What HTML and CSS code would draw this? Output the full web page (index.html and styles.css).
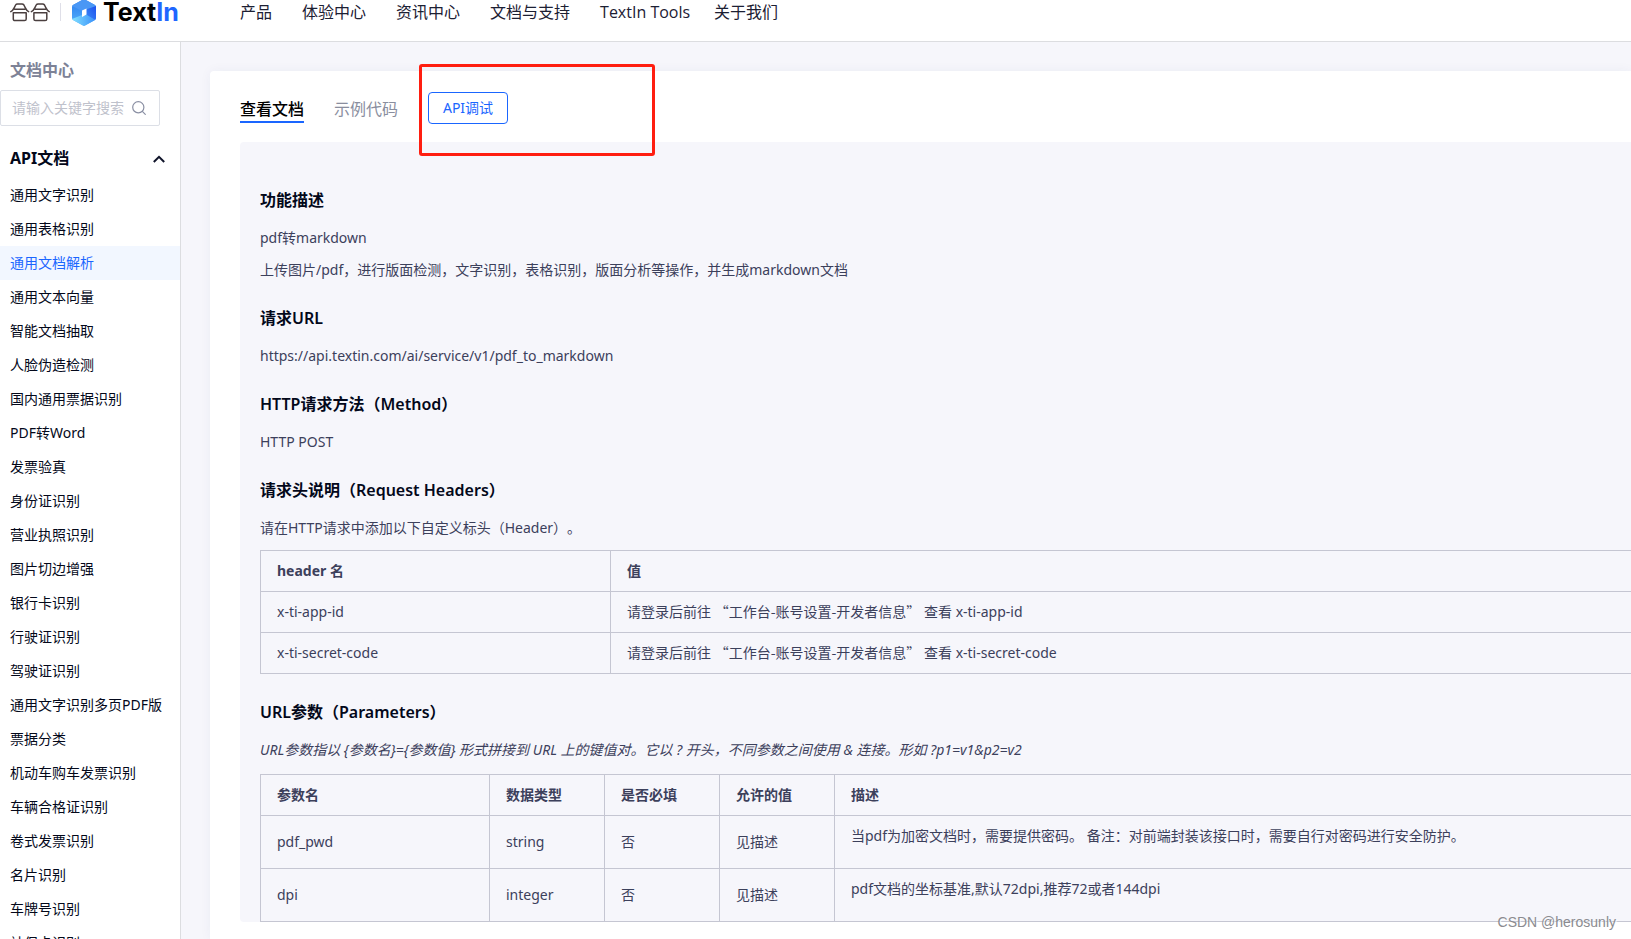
FILE: index.html
```html
<!DOCTYPE html>
<html lang="zh-CN">
<head>
<meta charset="utf-8">
<title>TextIn 文档中心</title>
<link rel="stylesheet" href="styles.css">
</head>
<body>
<header class="header">
  <a class="brand" href="#">
    <svg class="brand-hehe" width="40" height="19" viewBox="0 0 40 19" fill="none" stroke="#4a3f3f" stroke-width="1.5" stroke-linejoin="round" stroke-linecap="round">
      <path d="M.8 8.600C2.400 7.800 3.500 6.300 4.300 4.600L5.600 2Q6.200.9 7.500.9H12Q13.200.9 13.900 2L15.200 4.600C16 6.300 17 7.800 18.600 8.600M4.500 6.300H15M3.300 9.800H16.200V15.900Q16.200 17.600 14.500 17.600H5Q3.300 17.600 3.300 15.900Z"/>
      <path d="M21.400 8.600C23 7.800 24.100 6.300 24.900 4.600L26.200 2Q26.800.9 28.100.9H32.600Q33.800.9 34.500 2L35.800 4.600C36.600 6.300 37.600 7.800 39.200 8.600M25.100 6.300H35.600M23.900 9.800H36.800V15.900Q36.800 17.600 35.100 17.600H25.600Q23.900 17.600 23.900 15.900Z"/>
    </svg>
    <span class="brand-line"></span>
    <svg class="brand-cube" width="24" height="27" viewBox="0 0 24 27">
      <defs>
        <linearGradient id="cubeLeft" x1="0" y1="0" x2="0" y2="1"><stop offset="0" stop-color="#2878ee"/><stop offset="1" stop-color="#55b4fb"/></linearGradient>
        <linearGradient id="cubeRight" x1="1" y1="0" x2="0" y2="1"><stop offset="0" stop-color="#1c50ed"/><stop offset="1" stop-color="#3c8cf8"/></linearGradient>
        <linearGradient id="cubeBase" x1="0" y1="0" x2="1" y2="0"><stop offset="0" stop-color="#82e1ff"/><stop offset="1" stop-color="#3b91fa"/></linearGradient>
      </defs>
      <path d="M12 0 23 6Q24 7 24 8V19Q24 20 23 21L13 26.500Q12 27 11 26.500L1 21Q0 20 0 19V8Q0 7 1 6Z" fill="url(#cubeLeft)"/>
      <path d="M12 0 23 6Q24 7 24 8L14 10.500 10 12 0 7 1 6Z" fill="#4a97f5"/>
      <path d="M14 10.500 24 7V19Q24 20 23 21L14 15.500Z" fill="url(#cubeRight)"/>
      <path d="M0 20 10 16 14 15.500 23 21 13 26.500Q12 27 11 26.500L1 21Z" fill="url(#cubeBase)"/>
      <path d="M10 11.500 14.500 9.500V15.500L10 18Z" fill="#fff"/>
    </svg>
    <span class="brand-name">Text<span class="brand-in">In</span></span>
  </a>
  <nav class="nav">
    <a href="#">产品</a>
    <a href="#">体验中心</a>
    <a href="#">资讯中心</a>
    <a href="#">文档与支持</a>
    <a class="nav-tools" href="#">TextIn Tools</a>
    <a href="#">关于我们</a>
  </nav>
</header>
<div class="layout">
  <aside class="sidebar">
    <h2 class="sidebar-title">文档中心</h2>
    <div class="search">
      <input class="search-input" type="text" placeholder="请输入关键字搜索" aria-label="请输入关键字搜索">
      <svg width="14" height="14" viewBox="0 0 14 14" fill="none" stroke="#8a8fa3" stroke-width="1.200" stroke-linecap="round"><circle cx="6.300" cy="6.300" r="5.600"/><path d="M10.600 10.600 13.300 13.300"/></svg>
    </div>
    <button class="group" type="button" aria-expanded="true">API文档
      <svg width="12" height="10" viewBox="0 0 12 10" fill="none" stroke="#10142a" stroke-width="2"><path d="M.8 9 6 3.800 11.200 9"/></svg>
    </button>
    <ul class="menu">
      <li><a href="#">通用文字识别</a></li>
      <li><a href="#">通用表格识别</a></li>
      <li><a class="active" href="#">通用文档解析</a></li>
      <li><a href="#">通用文本向量</a></li>
      <li><a href="#">智能文档抽取</a></li>
      <li><a href="#">人脸伪造检测</a></li>
      <li><a href="#">国内通用票据识别</a></li>
      <li><a href="#">PDF转Word</a></li>
      <li><a href="#">发票验真</a></li>
      <li><a href="#">身份证识别</a></li>
      <li><a href="#">营业执照识别</a></li>
      <li><a href="#">图片切边增强</a></li>
      <li><a href="#">银行卡识别</a></li>
      <li><a href="#">行驶证识别</a></li>
      <li><a href="#">驾驶证识别</a></li>
      <li><a href="#">通用文字识别多页PDF版</a></li>
      <li><a href="#">票据分类</a></li>
      <li><a href="#">机动车购车发票识别</a></li>
      <li><a href="#">车辆合格证识别</a></li>
      <li><a href="#">卷式发票识别</a></li>
      <li><a href="#">名片识别</a></li>
      <li><a href="#">车牌号识别</a></li>
      <li><a href="#">社保卡识别</a></li>
    </ul>
  </aside>
  <main class="main">
    <div class="card">
      <div class="tabs">
        <button class="tab tab-active" type="button">查看文档</button>
        <button class="tab" type="button">示例代码</button>
        <button class="debug" type="button">API调试</button>
      </div>
      <div class="highlight"></div>
      <article class="doc">
        <h3>功能描述</h3>
        <p>pdf转markdown</p>
        <p>上传图片/pdf，进行版面检测，文字识别，表格识别，版面分析等操作，并生成markdown文档</p>
        <h3>请求URL</h3>
        <p>https://api.textin.com/ai/service/v1/pdf_to_markdown</p>
        <h3>HTTP请求方法（Method）</h3>
        <p>HTTP POST</p>
        <h3>请求头说明（Request Headers）</h3>
        <p>请在HTTP请求中添加以下自定义标头（Header）。</p>
        <table class="headers">
          <thead><tr><th class="col-header">header 名</th><th>值</th></tr></thead>
          <tbody>
            <tr><td>x-ti-app-id</td><td>请登录后前往 <span class="quoted">“工作台-账号设置-开发者信息”</span> 查看 x-ti-app-id</td></tr>
            <tr><td>x-ti-secret-code</td><td>请登录后前往 <span class="quoted">“工作台-账号设置-开发者信息”</span> 查看 x-ti-secret-code</td></tr>
          </tbody>
        </table>
        <h3>URL参数（Parameters）</h3>
        <p><em>URL参数指以 {参数名}={参数值} 形式拼接到 URL 上的键值对。它以 ? 开头，不同参数之间使用 &amp; 连接。形如 ?p1=v1&amp;p2=v2</em></p>
        <table class="params">
          <thead><tr><th class="col-name">参数名</th><th class="col-small">数据类型</th><th class="col-small">是否必填</th><th class="col-small">允许的值</th><th>描述</th></tr></thead>
          <tbody>
            <tr><td>pdf_pwd</td><td>string</td><td>否</td><td>见描述</td><td><p>当pdf为加密文档时，需要提供密码。 备注：对前端封装该接口时，需要自行对密码进行安全防护。</p></td></tr>
            <tr><td>dpi</td><td>integer</td><td>否</td><td>见描述</td><td><p>pdf文档的坐标基准,默认72dpi,推荐72或者144dpi</p></td></tr>
          </tbody>
        </table>
      </article>
    </div>
  </main>
</div>
<div class="watermark">CSDN @herosunly</div>
</body>
</html>
```
FILE: styles.css
```css
* {
  box-sizing: border-box;
}

body {
  margin: 0;
  height: 100vh;
  overflow: hidden;
  display: flex;
  flex-direction: column;
  background: #f6f6fb;
  color: #03081a;
  font-family: "Noto Sans", "Noto Sans CJK SC", sans-serif;
  font-size: 14px;
  line-height: 24px;
  text-spacing-trim: space-all;
}

a {
  color: inherit;
  text-decoration: none;
}

button {
  border: 0;
  padding: 0;
  background: none;
  color: inherit;
  font: inherit;
  cursor: pointer;
}

.header {
  flex: none;
  display: flex;
  align-items: center;
  height: 42px;
  padding: 0 10px 17px;
  background: #fff;
  border-bottom: 1px solid #dcdde0;
}

.brand {
  display: flex;
  align-items: center;
  width: 230px;
}

.brand-line {
  width: 1px;
  height: 18px;
  margin: 0 11px 0 10px;
  background: #dfdfe8;
}

.brand-name {
  margin-left: 7px;
  color: #000;
  font-family: Inter, sans-serif;
  font-size: 25px;
  font-weight: 700;
}

.brand-in {
  color: #1f66ff;
}

.nav {
  display: flex;
  font-family: "Open Sans", "Noto Sans CJK SC", sans-serif;
  font-size: 16px;
  color: #1c2033;
}

.nav a {
  margin-right: 30px;
}

.nav .nav-tools {
  margin-right: 24px;
}

.layout {
  flex: 1;
  display: flex;
  min-height: 0;
}

.sidebar {
  flex: none;
  width: 181px;
  overflow: hidden;
  background: #fff;
  border-right: 1px solid #dcdde0;
}

.sidebar-title {
  margin: 16px 0 8px 10px;
  color: #7d8296;
  font-size: 16px;
  font-weight: 600;
}

.search {
  display: flex;
  align-items: center;
  width: 160px;
  height: 36px;
  padding: 0 13px 0 11px;
  border: 1px solid #dcdfe6;
  border-radius: 2px;
}

.search-input {
  flex: 1;
  min-width: 0;
  border: 0;
  padding: 0;
  outline: 0;
  background: none;
  font: inherit;
}

.search-input::placeholder {
  color: #bfc2cc;
}

.group {
  display: flex;
  align-items: center;
  justify-content: space-between;
  width: 100%;
  margin: 20px 0 8px;
  padding: 0 15px 0 10px;
  font-size: 16px;
  font-weight: 700;
}

.menu {
  margin: 0;
  padding: 0;
  list-style: none;
}

.menu a {
  display: block;
  padding: 5px 10px;
  white-space: nowrap;
}

.menu .active {
  background: #f2f7ff;
  color: #1a66ff;
}

.main {
  flex: 1;
  min-width: 0;
  padding: 29px 0 0 29px;
}

.card {
  position: relative;
  height: 100%;
  padding: 21px 0 0 30px;
  background: #fff;
  border-radius: 4px 0 0 0;
  box-shadow: 0 0 12px rgba(40, 50, 110, 0.05);
}

.tabs {
  display: flex;
  align-items: center;
  gap: 30px;
  height: 32px;
}

.tab {
  height: 30px;
  padding-top: 3px;
  border-bottom: 2px solid transparent;
  color: #8a8e9e;
  font-size: 16px;
}

.tab-active {
  border-color: #1a66ff;
  color: #000;
  font-weight: 500;
}

.debug {
  width: 80px;
  height: 32px;
  border: 1px solid #1a66ff;
  border-radius: 4px;
  color: #1a66ff;
}

.highlight {
  position: absolute;
  top: -7px;
  left: 209px;
  width: 236px;
  height: 92px;
  border: 3px solid #ff1e10;
  border-radius: 3px;
  pointer-events: none;
}

.doc {
  margin-top: 18px;
  padding: 46px 0 0 20px;
  border-radius: 4px 0 0 4px;
  background: #f6f6fb;
  color: #3c405b;
}

.doc h3 {
  margin: 24px 0 14px;
  color: #03081a;
  font-size: 16px;
  font-weight: 600;
}

.doc h3:first-child {
  margin-top: 0;
}

.doc p {
  margin: 0;
}

.doc p + p {
  margin-top: 8px;
}

.doc table {
  width: 100%;
  border-collapse: collapse;
  table-layout: fixed;
}

.doc th,
.doc td {
  padding: 8px 16px;
  border: 1px solid #c5c6d2;
  text-align: left;
}

.doc th {
  font-weight: 700;
}

.doc th:last-child,
.doc td:last-child {
  border-right: 0;
}

.doc td p {
  margin-bottom: 12px;
}

.doc .headers {
  margin: 10px 0 26px;
}

.doc .params {
  margin-top: 12px;
}

.quoted {
  font-family: "Noto Sans CJK SC", sans-serif;
  line-height: 16px;
}

.col-header {
  width: 350px;
}

.col-name {
  width: 229px;
}

.col-small {
  width: 115px;
}

.watermark {
  position: absolute;
  right: 15px;
  bottom: 5px;
  color: #8b8b90;
  font-family: "Liberation Sans", Arial, sans-serif;
  font-size: 14px;
  text-shadow: 1px 1px 1px #fff;
}
```
